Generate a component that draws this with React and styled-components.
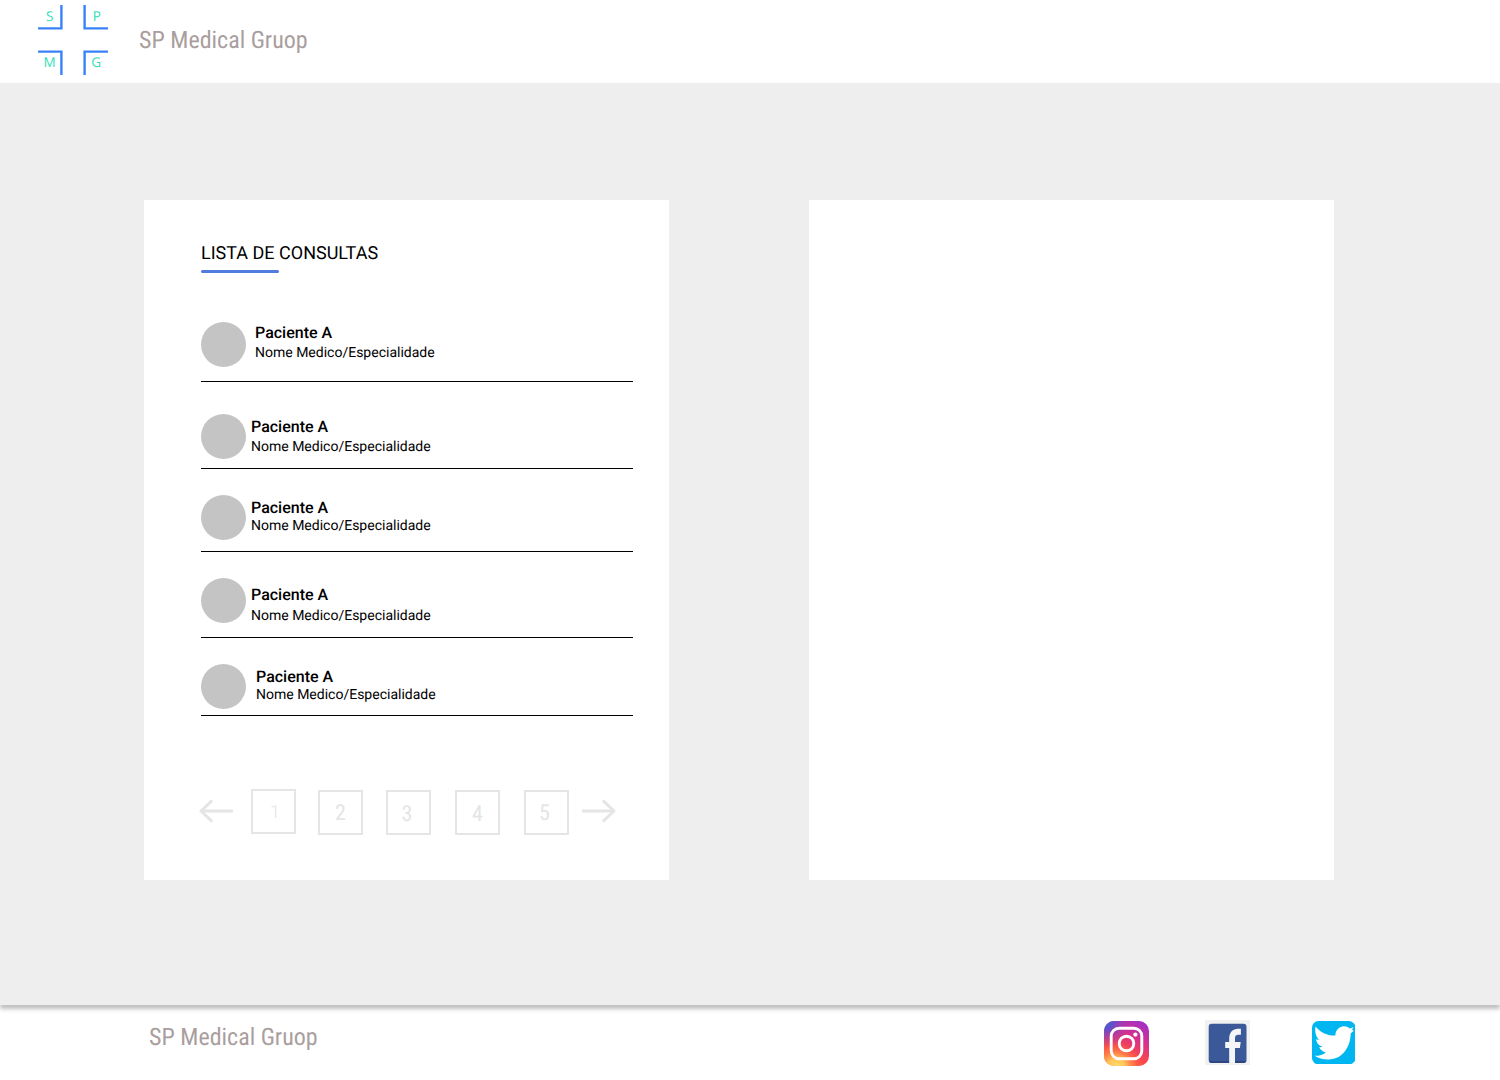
import React from "react";
import styled, { createGlobalStyle } from "styled-components";

const GlobalStyle = createGlobalStyle`
  *, *::before, *::after { box-sizing: border-box; }
  body {
    margin: 0;
    background: #fff;
    font-family: Roboto, "Liberation Sans", sans-serif;
    text-rendering: geometricPrecision;
    color: #000;
  }
`;

const Page = styled.div`
  display: flex;
  flex-direction: column;
  width: 1500px;
  height: 1080px;
  overflow: hidden;
`;

const Header = styled.header`
  display: flex;
  height: 83px;
  padding: 5px 0 0 38px;
  gap: 31px;
  background: #fff;
`;

const Logo = styled.svg`
  display: block;
  width: 70px;
  height: 70px;
  font-family: "Open Sans", "Noto Sans", sans-serif;
  font-size: 13.5px;
`;

const Brand = styled.span`
  font-family: "Roboto Condensed", Roboto, sans-serif;
  font-stretch: 75%;
  font-size: 24px;
  line-height: 28px;
  color: #a99e9e;
  white-space: nowrap;
  margin-top: ${(p) => p.$top}px;
`;

const Main = styled.main`
  position: relative;
  display: flex;
  align-items: flex-start;
  gap: 140px;
  height: 922px;
  padding: 117px 0 0 144px;
  background: #eee;
  box-shadow: 0 4px 4px rgba(0, 0, 0, 0.25);
`;

const Card = styled.section`
  width: 525px;
  height: 680px;
  padding: 43px 36px 0 57px;
  background: #fff;
`;

const Title = styled.h1`
  margin: 0;
  font-size: 18px;
  font-weight: 400;
  line-height: 21px;
  white-space: nowrap;
`;

const Underline = styled.div`
  width: 78px;
  height: 3px;
  margin-top: 6px;
  border-radius: 2px;
  background: #527bdf;
`;

const List = styled.ul`
  list-style: none;
  margin: 49px 0 0;
  padding: 0;
`;

const Item = styled.li`
  display: flex;
  align-items: flex-start;
  height: ${(p) => p.$height}px;
  margin-top: ${(p) => p.$before}px;
  border-bottom: 1px solid #000;
`;

const Avatar = styled.div`
  flex: none;
  width: 45px;
  height: 45px;
  border-radius: 50%;
  background: #c4c4c4;
`;

const Details = styled.div`
  display: flex;
  flex-direction: column;
  gap: ${(p) => p.$gap}px;
  margin: ${(p) => p.$top}px 0 0 ${(p) => p.$left}px;
  white-space: nowrap;
`;

const Name = styled.span`
  font-size: 16px;
  font-weight: 500;
  line-height: 19px;
`;

const Doctor = styled.span`
  font-size: 14px;
  line-height: 16px;
`;

const Pagination = styled.nav`
  display: flex;
  align-items: flex-start;
  margin: 73px 0 0 -2px;
`;

const Arrow = styled.svg`
  flex: none;
  display: block;
  width: 34px;
  height: 24px;
  margin: 10px 0 0 ${(p) => p.$left || 0}px;
  transform: ${(p) => (p.$flip ? "scaleX(-1)" : "none")};
`;

const PageButton = styled.button`
  flex: none;
  width: 45px;
  height: 45px;
  margin: ${(p) => p.$top}px 0 0 ${(p) => p.$left}px;
  padding: ${(p) => p.$pad};
  border: 2px solid #e5e5e5;
  background: transparent;
  color: #e5e5e5;
  font-family: ${(p) => (p.$wide ? "Roboto, sans-serif" : '"Roboto Condensed", Roboto, sans-serif')};
  font-stretch: ${(p) => (p.$wide ? "100%" : "75%")};
  font-weight: ${(p) => (p.$wide ? 300 : 400)};
  font-size: ${(p) => p.$size}px;
  line-height: 26px;
  text-align: center;
  text-rendering: inherit;
`;

const Footer = styled.footer`
  display: flex;
  justify-content: space-between;
  height: 75px;
  padding: 0 144.6px 0 149px;
  background: #fff;
`;

const Social = styled.div`
  display: flex;
  align-items: flex-start;
  padding-top: 15px;
`;

const SocialIcon = styled.svg`
  flex: none;
  display: block;
  width: ${(p) => p.$size}px;
  height: ${(p) => p.$size}px;
  margin: ${(p) => p.$top || 0}px 0 0 ${(p) => p.$left || 0}px;
`;

const appointments = [
  { before: 0, height: 60, top: 1, left: 9, gap: 3 },
  { before: 32, height: 55, top: 3, left: 5, gap: 3 },
  { before: 26, height: 57, top: 3, left: 5, gap: 1 },
  { before: 26, height: 60, top: 7, left: 5, gap: 4 },
  { before: 26, height: 52, top: 3, left: 10, gap: 1 },
];

const pages = [
  { n: 1, top: 0, left: 18, size: 18, pad: "2px 0 0 3px", wide: true },
  { n: 2, top: 1, left: 22, size: 22, pad: "2px 0 0 0" },
  { n: 3, top: 1, left: 23, size: 22, pad: "4px 3px 0 0" },
  { n: 4, top: 1, left: 24, size: 22, pad: "4px 0 0 0" },
  { n: 5, top: 1, left: 24, size: 22, pad: "2px 4px 0 0" },
];

function ArrowIcon(props) {
  return (
    <Arrow viewBox="0 0 34 24" fill="none" stroke="#e5e5e5" strokeWidth="3" strokeLinecap="round" strokeLinejoin="round" {...props}>
      <path d="M34 12H2" strokeLinecap="butt" />
      <path d="M12.2 2.3L2 12l10.2 9.7" />
    </Arrow>
  );
}

function BrandLogo() {
  return (
    <Logo viewBox="0 0 70 70">
      <g fill="none" stroke="#3a82f8" strokeWidth="2.4">
        <path d="M0 23.4H23.4V0" />
        <path d="M70 23.4H46.6V0" />
        <path d="M0 46.6H23.4V70" />
        <path d="M70 46.6H46.6V70" />
      </g>
      <g fill="#2fdfb8" textAnchor="middle">
        <text x="11.7" y="16">S</text>
        <text x="58.9" y="16">P</text>
        <text x="11.7" y="62.2">M</text>
        <text x="58.2" y="62.2">G</text>
      </g>
    </Logo>
  );
}

function Instagram() {
  return (
    <SocialIcon viewBox="0 0 45 45" $size={45} $top={1}>
      <defs>
        <linearGradient id="igBase" x1="0.2" y1="1" x2="0.75" y2="0">
          <stop offset="0" stopColor="#ff6a3c" />
          <stop offset="0.35" stopColor="#fb4a48" />
          <stop offset="0.65" stopColor="#dc3283" />
          <stop offset="1" stopColor="#a52fc4" />
        </linearGradient>
        <radialGradient id="igWarm" cx="0.27" cy="1.05" r="0.6">
          <stop offset="0" stopColor="#ffe070" />
          <stop offset="0.35" stopColor="#ffc557" />
          <stop offset="1" stopColor="#ff5543" stopOpacity="0" />
        </radialGradient>
        <radialGradient id="igCool" cx="0" cy="0" r="0.6">
          <stop offset="0" stopColor="#3771d8" />
          <stop offset="0.3" stopColor="#5a52ce" />
          <stop offset="1" stopColor="#a033c0" stopOpacity="0" />
        </radialGradient>
      </defs>
      <rect width="45" height="45" rx="10" fill="url(#igBase)" />
      <rect width="45" height="45" rx="10" fill="url(#igWarm)" />
      <rect width="45" height="45" rx="10" fill="url(#igCool)" />
      <g fill="none" stroke="#fff" strokeWidth="2.9">
        <rect x="7.2" y="7.2" width="30.6" height="30.6" rx="8" />
        <circle cx="22.5" cy="22.5" r="7.3" />
      </g>
      <circle cx="31.4" cy="13.6" r="2.1" fill="#fff" />
    </SocialIcon>
  );
}

function Facebook() {
  return (
    <SocialIcon viewBox="0 0 45 45" $size={45} $left={56}>
      <rect width="45" height="45" fill="#f1f1f1" />
      <rect x="3.7" y="3.8" width="37.8" height="39.2" rx="3" fill="#3b5998" />
      <path d="M4 41h37.2a2.8 2.8 0 0 1-2.7 2h-32A2.8 2.8 0 0 1 4 41z" fill="#2c4680" />
      <path
        d="M24.2 43V28h-4v-5.9h4v-3.6c0-6.2 3.6-9.8 8.8-9.8h2.9v6h-2.4c-2.6 0-3.5 1.2-3.5 3.6v3.8h5.7l-.8 5.9H30V43z"
        fill="#f4f6f8"
      />
    </SocialIcon>
  );
}

function Twitter() {
  return (
    <SocialIcon viewBox="0 0 43.4 43.4" $size={43.4} $top={1} $left={62}>
      <rect width="43.4" height="43.4" rx="6.5" fill="#00b6f1" />
      <path
        fill="#fff"
        d="M3.6 5.4C7.4 10.2 13 13.4 19.2 14.4C20.6 14.6 22.2 14.7 23.4 14.5C23.3 9.2 27.4 5.4 32 5.3C34.4 5.3 36.2 6.2 37.6 7.4L41.6 6.2L39.8 9.1L42 9.4L38.7 12.6C38.6 25.6 31 38.3 16.6 38.6C11.2 38.7 6 37.2 2.6 34.8C6.6 35 10.8 34 13.8 31.4C10.8 30.8 8.2 29 7.2 26C8.2 26.2 9.4 26.2 10.6 25.8C7 24.6 4.4 21.8 4.1 18.2C5 18.7 6.2 19 7.4 19C4.2 16.2 2.4 11 3.6 5.4Z"
      />
    </SocialIcon>
  );
}

export default function App() {
  return (
    <Page>
      <GlobalStyle />
      <Header>
        <BrandLogo />
        <Brand $top={21}>SP Medical Gruop</Brand>
      </Header>
      <Main>
        <Card>
          <Title>LISTA DE CONSULTAS</Title>
          <Underline />
          <List>
            {appointments.map((a, i) => (
              <Item key={i} $before={a.before} $height={a.height}>
                <Avatar />
                <Details $top={a.top} $left={a.left} $gap={a.gap}>
                  <Name>Paciente A</Name>
                  <Doctor>Nome Medico/Especialidade</Doctor>
                </Details>
              </Item>
            ))}
          </List>
          <Pagination>
            <ArrowIcon />
            {pages.map((p) => (
              <PageButton key={p.n} $top={p.top} $left={p.left} $size={p.size} $pad={p.pad} $wide={p.wide}>
                {p.n}
              </PageButton>
            ))}
            <ArrowIcon $flip $left={13} />
          </Pagination>
        </Card>
        <Card />
      </Main>
      <Footer>
        <Brand $top={18}>SP Medical Gruop</Brand>
        <Social>
          <Instagram />
          <Facebook />
          <Twitter />
        </Social>
      </Footer>
    </Page>
  );
}
